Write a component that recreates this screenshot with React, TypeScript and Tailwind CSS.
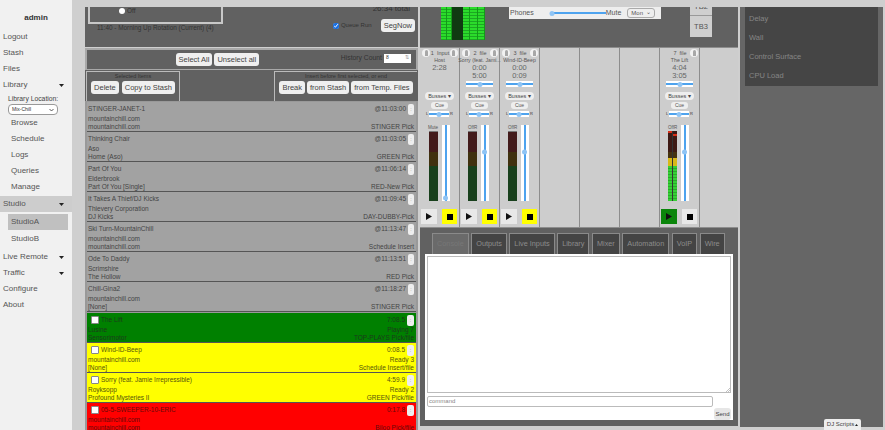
import React from "react";

const Caret = () => (
  <svg width="5" height="3" viewBox="0 0 5 3" className="shrink-0">
    <path d="M0 0h5L2.5 3z" fill="#222" />
  </svg>
);

const NavItem = ({ label, caret, sub }: { label: string; caret?: boolean; sub?: boolean }) => (
  <div className={`flex h-[16px] items-center justify-between pr-[8px] text-[#555] ${sub ? "pl-[11px]" : "pl-[3px]"}`}>
    <span>{label}</span>
    {caret && <Caret />}
  </div>
);

const Sidebar = () => (
  <div className="flex w-[72px] shrink-0 flex-col bg-[#f1f1f1] pt-[10px] text-[8px]">
    <div className="mb-[4px] h-[15px] text-center font-bold leading-[15px] text-[#333]">admin</div>
    <NavItem label="Logout" />
    <NavItem label="Stash" />
    <NavItem label="Files" />
    <NavItem label="Library" caret />
    <div className="mt-[2px] pl-[8px] text-[6.8px] leading-[8px] text-[#444]">Library Location:</div>
    <div className="ml-[8px] mt-[1px] flex h-[11px] w-[50px] items-center justify-between rounded-[4px] border border-[#999] bg-white px-[3px] text-[5px] text-[#333]">
      <span>Mix-Chill</span>
      <svg width="5" height="4" viewBox="0 0 5 4"><path d="M.5 1l2 2 2-2" fill="none" stroke="#333" strokeWidth=".8" /></svg>
    </div>
    <NavItem label="Browse" sub />
    <NavItem label="Schedule" sub />
    <NavItem label="Logs" sub />
    <NavItem label="Queries" sub />
    <NavItem label="Manage" sub />
    <div className="mt-px bg-[#cdcdcd]">
      <NavItem label="Studio" caret />
    </div>
    <div className="ml-[8px] mr-[4px] mt-[2px] flex h-[16px] items-center bg-[#c0c0c0] pl-[3px] text-[#555]">StudioA</div>
    <div className="mb-[2px] mt-px flex h-[16px] items-center pl-[11px] text-[#555]">StudioB</div>
    <NavItem label="Live Remote" caret />
    <NavItem label="Traffic" caret />
    <NavItem label="Configure" />
    <NavItem label="About" />
  </div>
);

const Btn = ({ children, className = "" }: { children: React.ReactNode; className?: string }) => (
  <span className={`flex h-[13px] items-center whitespace-nowrap rounded-[3px] bg-[#efefef] px-[3px] text-[7.5px] text-[#444] ${className}`}>
    {children}
  </span>
);

type RowData = {
  title: string;
  time: string;
  artist: string;
  album: string;
  tag: string;
  state?: string;
  check?: boolean;
  color?: string;
};

const rows: RowData[] = [
  { title: "STINGER-JANET-1", time: "@11:03:00", artist: "mountainchill.com", album: "mountainchill.com", tag: "STINGER Pick" },
  { title: "Thinking Chair", time: "@11:03:05", artist: "Aso", album: "Home (Aso)", tag: "GREEN Pick" },
  { title: "Part Of You", time: "@11:06:14", artist: "Elderbrook", album: "Part Of You [Single]", tag: "RED-New Pick" },
  { title: "It Takes A Thief/DJ Kicks", time: "@11:09:45", artist: "Thievery Corporation", album: "DJ Kicks", tag: "DAY-DUBBY-Pick" },
  { title: "Ski Turn-MountainChill", time: "@11:13:47", artist: "mountainchill.com", album: "mountainchill.com", tag: "Schedule Insert" },
  { title: "Ode To Daddy", time: "@11:13:51", artist: "Scrimshire", album: "The Hollow", tag: "RED Pick" },
  { title: "Chill-Gina2", time: "@11:18:27", artist: "mountainchill.com", album: "[None]", tag: "STINGER Pick" },
];

const liveRows: RowData[] = [
  { title: "The Lift", time: "7:08.5", artist: "Lusine", album: "Sensorimotor", tag: "TOP-PLAYS Pick/file", state: "Playing 7", check: true, color: "bg-[#008000] text-[#1c3a1c]" },
  { title: "Wind-ID-Beep", time: "0:08.5", artist: "mountainchill.com", album: "[None]", tag: "Schedule Insert/file", state: "Ready 3", check: true, color: "bg-[#ffff00] text-[#55550c]" },
  { title: "Sorry (feat. Jamie Irrepressible)", time: "4:59.9", artist: "Royksopp", album: "Profound Mysteries II", tag: "GREEN Pick/file", state: "Ready 2", check: true, color: "bg-[#ffff00] text-[#55550c]" },
  { title: "05-5-SWEEPER-10-ERIC", time: "0:17.8", artist: "mountainchill.com", album: "mountainchill.com", tag: "Biloo Pick/file", check: true, color: "bg-[#ff0000] text-[#660a0a]" },
];

const Row = ({ row }: { row: RowData }) => (
  <div className={`flex h-[30px] shrink-0 flex-col border-b-[1px] border-[#555] pl-px pr-[2px] text-[6.5px] leading-[8px] ${row.color ?? "bg-[#a2a2a2] text-[#444]"}`}>
    <div className="flex h-[13px] items-center justify-between pt-[1px]">
      <div className="flex items-center gap-[2px]">
        {row.check && <span className="ml-[3px] h-[8px] w-[8px] rounded-[1px] border border-[#888] bg-white" />}
        <span>{row.title}</span>
      </div>
      <div className="flex items-center gap-[2px]">
        <span>{row.time}</span>
        <span className={`flex h-[11px] items-center justify-center rounded-[2px] bg-[#eee] text-[5px] text-[#777] ${row.check ? "w-[7px]" : "w-[6px]"}`}>:</span>
      </div>
    </div>
    <div className="flex h-[8px] items-center justify-between">
      <span>{row.artist}</span>
      <span>{row.state}</span>
    </div>
    <div className="flex h-[8px] items-center justify-between">
      <span>{row.album}</span>
      <span>{row.tag}</span>
    </div>
  </div>
);

const QueuePanel = () => (
  <div className="flex w-[333px] shrink-0 flex-col overflow-hidden">
    <div className="flex h-[40px] shrink-0 flex-col justify-end overflow-hidden bg-[#616161] pb-[15px] pl-[3px] pr-[3px] text-[6.4px] text-[#333]">
      <div className="flex items-end justify-between">
        <div>
          <div className="flex h-[17px] w-[135px] items-start gap-[2px] border-x-2 border-b-2 border-[#c8c8c8] pl-[29px] pt-[1px]">
            <span className="h-[6px] w-[6px] rounded-full bg-white" />
            <span className="leading-[6px]">Off</span>
          </div>
          <div className="pl-[9px] leading-[8px]">11:40 - Morning Up Rotation (Current) (4)</div>
        </div>
        <div className="flex flex-col items-end">
          <span className="mb-[6px] pr-[5px] text-[8px] leading-[8px]">26:34 total</span>
          <div className="flex items-center gap-[2px] text-[6px]">
            <input type="checkbox" defaultChecked className="h-[6px] w-[6px] accent-[#1a6fe0]" />
            <span className="mr-[7px]">Queue Run</span>
            <Btn>SegNow</Btn>
          </div>
        </div>
      </div>
    </div>
    <div className="mt-[1px] flex h-[22px] shrink-0 items-center border-2 border-b-[1px] border-[#a8a8a8] bg-[#616161] text-[#333]">
      <div className="flex flex-1 items-center justify-center gap-[2px] pl-[7px]">
        <Btn>Select All</Btn>
        <Btn>Unselect all</Btn>
      </div>
      <div className="-mt-[3px] flex items-center gap-[2px] pr-[5px] text-[6.8px]">
        <span>History Count</span>
        <div className="flex h-[9px] w-[27px] items-center justify-between bg-white px-[2px] text-[5px]">
          <span>8</span>
          <span className="text-[#999]">⇅</span>
        </div>
      </div>
    </div>
    <div className="flex h-[31px] shrink-0 justify-between bg-[#616161] px-[1px] pt-px text-[5.5px] text-[#333]">
      <div className="flex w-[94px] flex-col items-center border-x-[1px] border-t-[1px] border-[#bbb]">
        <span className="mb-[1px] leading-[8px]">Selected Items</span>
        <div className="flex gap-[3px]">
          <Btn>Delete</Btn>
          <Btn>Copy to Stash</Btn>
        </div>
      </div>
      <div className="flex w-[143px] flex-col items-center border-l-[1px] border-t-[1px] border-[#bbb]">
        <span className="mb-[1px] leading-[8px]">Insert before first selected, or end</span>
        <div className="flex gap-[2px]">
          <Btn>Break</Btn>
          <Btn>from Stash</Btn>
          <Btn>from Temp. Files</Btn>
        </div>
      </div>
    </div>
    <div className="flex flex-1 flex-col overflow-hidden border-x-2 border-[#999] bg-[#999] pt-px">
      {rows.map((r) => (
        <Row key={r.title} row={r} />
      ))}
      <div className="h-px shrink-0" />
      {liveRows.map((r) => (
        <Row key={r.title} row={r} />
      ))}
    </div>
  </div>
);

const HSlider = ({ className = "", pos = "50%" }: { className?: string; pos?: string }) => (
  <div className={`relative h-[6px] bg-white ${className}`}>
    <div className="absolute left-0 right-0 top-[2px] h-[2px] bg-[#4ea3ee]" />
    <div className="absolute top-[0.5px] h-[5px] w-[5px] -translate-x-1/2 rounded-full bg-[#8fc4f4]" style={{ left: pos }} />
  </div>
);

const Knob = () => (
  <span className="flex h-[8px] w-[8px] items-start justify-center rounded-full bg-[#f2f2f2]">
    <span className="mt-px h-[6px] w-[3px] rounded-t-full bg-[#a8a8a8]" />
  </span>
);

type Strip = {
  num: string;
  kind: string;
  name: string;
  t1: string;
  t2?: string;
  route: string;
  sliderPos: string;
  leftKnob?: boolean;
  live?: boolean;
  stopOn?: boolean;
};

const LiveColumn = ({ peak, offset }: { peak: string; offset: boolean }) => (
  <div className="flex h-full flex-1 flex-col bg-[#3e1a14]">
    <div className={`h-[2px] w-full ${peak} ${offset ? "mt-[3px]" : ""}`} />
    <div className="flex-1" />
    <div className="h-[6px] bg-[#453210]" />
    <div className="h-[8px] bg-[#d8b818]" />
    <div className="h-[35px] bg-[repeating-linear-gradient(to_bottom,#35cf35_0,#35cf35_2px,#2aa82a_2px,#2aa82a_3px)]" />
  </div>
);

const Meter = ({ live }: { live?: boolean }) =>
  live ? (
    <div className="flex h-[70px] w-[9px] gap-px bg-[#333]">
      <LiveColumn peak="bg-[#d83018]" offset={false} />
      <LiveColumn peak="bg-[#d83018]" offset />
    </div>
  ) : (
    <div className="flex h-[70px] w-[9px] flex-col border-t border-[#777]">
      <div className="h-[20px] bg-[#431b1b]" />
      <div className="h-[14px] bg-[#40310f]" />
      <div className="flex-1 bg-[#18401c]" />
    </div>
  );

const StripView = ({ s }: { s: Strip }) => (
  <div className="flex h-full w-[40px] flex-col border-r-[1px] border-[#8d8d8d] text-[#555]">
    <div className="flex h-[8px] items-center justify-between pl-[2px] pr-[1px] pt-[2px] text-[5.5px]">
      {s.leftKnob ? <Knob /> : <span className="w-[8px]" />}
      <span>{s.num}&nbsp;&nbsp;{s.kind}</span>
      <Knob />
    </div>
    <div className="flex h-[8px] justify-center whitespace-nowrap text-[5.2px] leading-[8px]">{s.name}</div>
    <div className="h-[8px] text-center text-[7.5px] leading-[8px] text-[#666]">{s.t1}</div>
    <div className="h-[8px] text-center text-[7.5px] leading-[8px] text-[#666]">{s.t2}</div>
    <div className="h-[9px] px-[6px] pt-[1px]">{s.t2 && <HSlider />}</div>
    <div className="mx-[5px] mt-[3px] flex h-[8px] items-center justify-center rounded-[4px] bg-[#eee] text-[5.5px] text-[#444]">Busses ▾</div>
    <div className="mx-[11px] mt-[2px] flex h-[7px] items-center justify-center rounded-[3px] bg-[#eee] text-[5px]">Cue</div>
    <div className="mt-px flex h-[8px] items-center gap-px px-[6px] text-[4px] text-[#333]">
      L<HSlider className="flex-1" />R
    </div>
    <div className="mt-[6px] flex gap-[4px] pl-[8px]">
      <div className="flex flex-col items-center">
        <span className="h-[7px] text-[4.5px] leading-[7px]">{s.route}</span>
        <Meter live={s.live} />
      </div>
      <div className="relative mt-px h-[76px] w-[8px] bg-white">
        <div className="absolute bottom-0 left-[3px] top-0 w-[2px] bg-[#4ea3ee]" />
        <div className="absolute left-[1px] h-[5px] w-[5px] -translate-y-1/2 rounded-full bg-[#8fc4f4]" style={{ top: s.sliderPos }} />
      </div>
    </div>
    <div className="mt-[8px] flex gap-[5px] pl-px">
      <span className={`flex h-[15px] w-[16px] items-center justify-center ${s.live ? "bg-[#0a850a]" : "bg-[#e8e8e8]"}`}>
        <svg width="6" height="7" viewBox="0 0 6 7"><path d="M0 0l6 3.5L0 7z" fill="#111" /></svg>
      </span>
      <span className={`flex h-[15px] w-[15px] items-center justify-center ${s.stopOn ? "bg-[#ffff00]" : "bg-[#e8e8e8]"}`}>
        <span className="h-[6px] w-[6px] bg-black" />
      </span>
    </div>
  </div>
);

const strips: Strip[] = [
  { num: "1", kind: "Input", name: "Host", t1: "2:28", route: "Mute", sliderPos: "96%", leftKnob: true, stopOn: true },
  { num: "2", kind: "file", name: "Sorry (feat. Jami...", t1: "0:00", t2: "5:00", route: "OffR", sliderPos: "35%", leftKnob: true, stopOn: true },
  { num: "3", kind: "file", name: "Wind-ID-Beep", t1: "0:00", t2: "0:09", route: "OffR", sliderPos: "35%", leftKnob: true, stopOn: true },
];
const lift: Strip = { num: "7", kind: "file", name: "The Lift", t1: "4:04", t2: "3:05", route: "OffR", sliderPos: "35%", live: true };

const tabs = ["Console", "Outputs", "Live Inputs", "Library", "Mixer", "Automation", "VoIP", "Wire"];

const lit = "h-full border-r border-[#129a18] bg-[repeating-linear-gradient(to_bottom,#2bdc2b_0,#2bdc2b_2px,#1ca822_2px,#1ca822_3px)]";

const MeterBars = () => (
  <div className="flex h-[33px] w-[44px]">
    <div className={`w-[5.5px] ${lit}`} />
    <div className={`w-[5.5px] ${lit}`} />
    <div className="h-full w-[11px] bg-[#103a12]" />
    <div className={`w-[7.3px] ${lit}`} />
    <div className={`w-[7.3px] ${lit}`} />
    <div className={`w-[7.4px] ${lit}`} />
  </div>
);

const MixerPanel = () => (
  <div className="ml-[2px] flex w-[318px] shrink-0 flex-col">
    <div className="flex h-[40px] shrink-0 bg-[#616161]">
      <div className="ml-[21px]"><MeterBars /></div>
      <div className="ml-[24px] flex h-[12px] w-[152px] items-center bg-[#eee] pl-px text-[7px] text-[#555]">
        <span className="mr-[16px]">Phones</span>
        <HSlider className="w-[56px] !bg-transparent" pos="4%" />
        <span>Mute</span>
        <span className="ml-[6px] flex h-[10px] w-[28px] items-center justify-between rounded-[3px] border border-[#aaa] bg-[#eee] px-[3px] text-[6px]">Mon<span className="-mt-[2px]">⌄</span></span>
      </div>
      <div className="ml-[29px] flex w-[22px] flex-col">
        <div className="h-[9px] overflow-hidden border-b border-[#999] bg-[#cfcfcf] text-center text-[7.5px] text-[#555]"><div className="-mt-[5px] leading-[9px]">TB2</div></div>
        <div className="flex h-[21px] items-center justify-center bg-[#cfcfcf] text-[7.5px] text-[#555]">TB3</div>
      </div>
    </div>
    <div className="flex h-[181px] shrink-0 border-y-[1px] border-[#8d8d8d] bg-[#cdcdcd]">
      {strips.map((s) => (
        <StripView key={s.num} s={s} />
      ))}
      {[4, 5, 6].map((n) => (
        <div key={n} className="h-full w-[40px] border-r-[1px] border-[#8d8d8d]" />
      ))}
      <StripView s={lift} />
      <div className="h-full flex-1" />
    </div>
    <div className="flex h-[198px] shrink-0 flex-col bg-[#616161] px-[5px] pt-[5px]">
      <div className="flex h-[21px] gap-[2.5px] pl-[7px] text-[7.3px]">
        {tabs.map((t, i) => (
          <span key={t} className={`flex items-center whitespace-nowrap border-x border-t border-[#8a8a8a] px-[4px] ${i === 0 ? "bg-[#6a6a6a] text-[#777]" : "bg-[#444] text-[#8c8c8c]"}`}>
            {t}
          </span>
        ))}
      </div>
      <div className="flex h-[166px] w-[308px] flex-col bg-white px-[2px] pt-[2px] text-[6px]">
        <div className="relative h-[137px] shrink-0 border border-[#bbb] bg-white">
          <svg width="5" height="5" viewBox="0 0 5 5" className="absolute bottom-0 right-0">
            <path d="M1 5l4-4M3 5l2-2" stroke="#999" strokeWidth=".6" />
          </svg>
        </div>
        <div className="mt-[3px] flex h-[11px] w-[286px] shrink-0 items-center rounded-[2px] border border-[#bbb] pl-px text-[#888]">command</div>
        <div className="mt-px flex justify-end">
          <span className="flex h-[12px] w-[17px] items-center justify-center rounded-[3px] bg-[#e6e6e6] text-[#444]">Send</span>
        </div>
      </div>
    </div>
  </div>
);

const RightPanel = () => (
  <div className="ml-[2px] flex h-[420px] w-[143px] shrink-0 flex-col bg-[#666] px-[5px]">
    <div className="flex h-[79px] flex-col bg-[#454545] pl-[4px] pt-[2px] text-[7.5px] text-[#858585]">
      {["Delay", "Wall", "Control Surface", "CPU Load"].map((t) => (
        <div key={t} className="h-[19px] leading-[19px]">{t}</div>
      ))}
    </div>
  </div>
);

export default function App() {
  return (
    <div className="relative flex h-[430px] w-[885px] overflow-hidden bg-[#cfcfcf] font-['Liberation_Sans',sans-serif]">
      <Sidebar />
      <div className="ml-[13px] flex h-full pt-[7px]">
        <QueuePanel />
        <MixerPanel />
        <RightPanel />
      </div>
      <div className="absolute bottom-0 left-[824px] flex h-[11px] w-[37px] items-center justify-center gap-px rounded-t-[2px] bg-[#eee] text-[6px] text-[#444]">
        DJ Scripts
        <svg width="3" height="2" viewBox="0 0 3 2"><path d="M0 2h3L1.5 0z" fill="#222" /></svg>
      </div>
    </div>
  );
}
